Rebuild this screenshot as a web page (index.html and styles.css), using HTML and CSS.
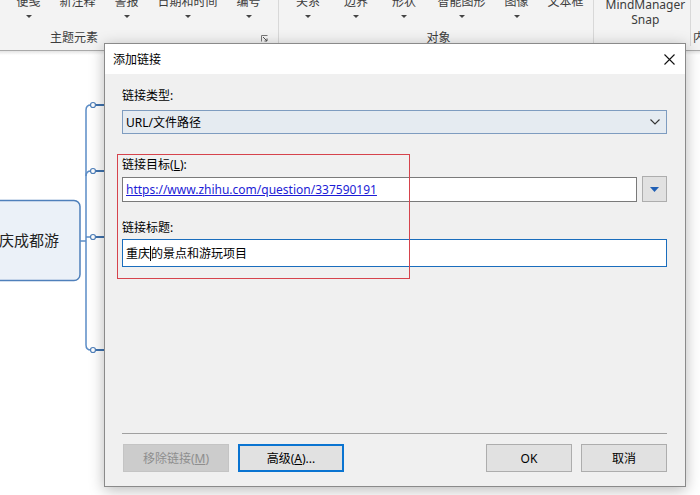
FILE: index.html
```html
<!DOCTYPE html>
<html lang="zh-CN">
<head>
  <meta charset="UTF-8">
  <title>添加链接</title>
  <link rel="stylesheet" href="styles.css">
</head>
<body>
  <header class="ribbon">
    <div class="group g-topic">
      <div class="cmds">
        <div class="cmd"><span>便笺</span><i class="drop-caret"></i></div>
        <div class="cmd"><span>新注释</span></div>
        <div class="cmd"><span>警报</span><i class="drop-caret"></i></div>
        <div class="cmd"><span>日期和时间</span><i class="drop-caret"></i></div>
        <div class="cmd"><span>编号</span><i class="drop-caret"></i></div>
      </div>
      <div class="glabel">
        <span class="topic-label">主题元素</span>
        <svg class="launcher" width="7" height="7" viewBox="0 0 7 7"><path d="M0.5 6.5V0.5H6.5" fill="none" stroke="#777"/><path d="M2 2L6 6M6 3.5V6H3.5" fill="none" stroke="#555"/></svg>
      </div>
    </div>
    <div class="group g-object">
      <div class="cmds">
        <div class="cmd wide"><span>关系</span><i class="drop-caret"></i></div>
        <div class="cmd wide"><span>边界</span><i class="drop-caret"></i></div>
        <div class="cmd wide"><span>形状</span><i class="drop-caret"></i></div>
        <div class="cmd"><span>智能图形</span><i class="drop-caret"></i></div>
        <div class="cmd"><span>图像</span><i class="drop-caret"></i></div>
        <div class="cmd"><span>文本框</span></div>
      </div>
      <div class="glabel center">对象</div>
    </div>
    <div class="group g-snap">
      <div class="cmds">
        <div class="cmd two-line"><span>MindManager</span><span>Snap</span></div>
      </div>
      <div class="glabel"></div>
    </div>
    <div class="group g-more">
      <div class="cmds"></div>
      <div class="glabel">内容</div>
    </div>
  </header>
  <div class="shade"></div>

  <svg class="mindmap" width="110" height="495" viewBox="0 0 110 495">
    <rect x="-12" y="200.5" width="92" height="80" rx="6" fill="#ebf1f8" stroke="#4f80bb" stroke-width="1.5"/>
    <text x="59" y="246" text-anchor="end" class="topic-text">重庆成都游</text>
    <g fill="none" stroke="#5b8cc6" stroke-width="1.5">
      <path d="M80 241H86"/>
      <path d="M104 105H91Q86 105 86 110V345Q86 350 91 350H104"/>
      <path d="M86 176Q86 171 91 171H104"/>
      <path d="M86 237H104"/>
    </g>
    <g fill="none" stroke="#3f72ae" stroke-width="2.2">
      <path d="M96 105H104M96 171H104M96 237H104M96 350H104"/>
    </g>
    <g fill="#fff" stroke="#4f80bb" stroke-width="1.2">
      <circle cx="93" cy="105" r="2.5"/>
      <circle cx="93" cy="171" r="2.5"/>
      <circle cx="93" cy="237" r="2.5"/>
      <circle cx="93" cy="350" r="2.5"/>
    </g>
  </svg>

  <div class="dialog">
    <div class="titlebar">
      <span>添加链接</span>
      <svg class="close" width="11" height="11" viewBox="0 0 11 11"><path d="M0.5 0.5L10.5 10.5M10.5 0.5L0.5 10.5" stroke="#111" stroke-width="1.1"/></svg>
    </div>
    <div class="dbody">
      <div class="lbl first">链接类型:</div>
      <div class="select">
        <span>URL/文件路径</span>
        <svg width="10" height="6" viewBox="0 0 10 6"><path d="M0.5 0.5L5 5L9.5 0.5" fill="none" stroke="#333" stroke-width="1.1"/></svg>
      </div>

      <div class="lbl gap-lg">链接目标(<u>L</u>):</div>
      <div class="url-row">
        <div class="field url"><a href="#">https://www.zhihu.com/question/337590191</a></div>
        <div class="drop-btn">
          <svg width="9" height="5" viewBox="0 0 9 5"><path d="M0 0H9L4.5 5Z" fill="#1f5fb5"/></svg>
        </div>
      </div>

      <div class="lbl gap-md">链接标题:</div>
      <div class="field title">重庆<span class="text-caret"></span>的景点和游玩项目</div>

      <div class="spacer"></div>
      <div class="sep"></div>
      <div class="actions">
        <button class="btn disabled">移除链接(<u>M</u>)</button>
        <button class="btn default">高级(<u>A</u>)...</button>
        <span class="fill"></span>
        <button class="btn">OK</button>
        <button class="btn">取消</button>
      </div>
    </div>
    <div class="annot"></div>
  </div>
</body>
</html>
```

FILE: styles.css
```css
* { box-sizing: border-box; }
body {
  margin: 0;
  width: 700px; height: 495px;
  overflow: hidden;
  position: relative;
  background: #fff;
  font-family: "Noto Sans", "Noto Sans CJK SC", sans-serif;
  font-size: 12px;
  color: #1a1a1a;
}

/* ribbon */
.ribbon {
  display: flex;
  height: 51px;
  background: #f3f3f3;
  border-bottom: 1px solid #a9a9a9;
  overflow: hidden;
  color: #3c3c3c;
}
.group {
  display: flex; flex-direction: column;
  border-right: 1px solid #d8d8d8;
  margin-bottom: 4px;
  flex-shrink: 0;
}
.cmds {
  display: flex;
  height: 30px;
  margin-top: -6px;
}
.cmd {
  display: flex; flex-direction: column; align-items: center;
  padding: 0 9.5px;
}
.cmd.wide { min-width: 48px; }
.cmd span { line-height: 16px; white-space: nowrap; }
.drop-caret {
  margin-top: 5px;
  width: 0; height: 0;
  border-left: 3px solid transparent;
  border-right: 3px solid transparent;
  border-top: 3px solid #444;
}
.cmd.two-line span { line-height: 15px; }
.cmd.two-line { padding-top: 3px; }
.glabel {
  display: flex; align-items: center;
  height: 16px; line-height: 16px;
  margin-top: 6px;
  white-space: nowrap;
}
.glabel.center { justify-content: center; }
.g-topic { width: 279px; padding-left: 7px; }
.g-topic .glabel { padding-left: 43px; padding-right: 10px; }
.topic-label { flex: 1; }
.launcher { margin-top: 1px; }
.g-object { width: 315px; padding-left: 5px; }
.g-snap { width: 97px; padding-left: 2px; }
.g-more { width: 40px; border-right: 0; }
.g-more .glabel { padding-left: 2px; }

.shade {
  height: 4px;
  background: linear-gradient(#e4e4e4, #fff);
}

/* mind map canvas */
.mindmap { position: absolute; left: 0; top: 0; }
.topic-text { font-size: 15px; fill: #222; font-family: "Noto Sans CJK SC", sans-serif; }

/* dialog */
.dialog {
  position: absolute;
  left: 104px; top: 43px;
  width: 582px; height: 444px;
  border: 1px solid #8a8a8a;
  background: #f0f0f0;
  box-shadow: 0 3px 14px rgba(0,0,0,0.28);
  display: flex; flex-direction: column;
}
.titlebar {
  height: 30px;
  background: #fff;
  display: flex; align-items: center; justify-content: space-between;
  padding: 0 10px 0 8px;
  color: #000;
}
.close { margin-top: 1px; }
.dbody {
  flex: 1;
  display: flex; flex-direction: column;
  padding: 0 18px 14px 17px;
}
.lbl { line-height: 16px; color: #000; }
.lbl.first { margin-top: 14px; }
.lbl.gap-lg { margin-top: 23px; }
.lbl.gap-md { margin-top: 18px; }
.select {
  margin-top: 6px;
  height: 24px;
  background: #e5ebf1;
  border: 1px solid #7e9cc0;
  display: flex; align-items: center; justify-content: space-between;
  padding: 0 6px 0 3px;
  color: #000;
}
.url-row {
  margin-top: 3px;
  display: flex; gap: 5px;
  height: 26px;
}
.field {
  background: #fff;
  display: flex; align-items: center;
  padding: 0 3px;
  color: #000;
}
.field.url {
  flex: 1;
  margin-top: 1px;
  border: 1px solid #7a7a7a;
}
.field.url a { color: #1c1cd6; text-decoration: underline; }
.drop-btn {
  width: 25px;
  background: #e1e1e1;
  border: 1px solid #adadad;
  display: flex; align-items: center; justify-content: center;
}
.field.title {
  margin-top: 3px;
  height: 28px;
  border: 1px solid #1a6dbd;
}
.text-caret {
  display: inline-block;
  width: 1px; height: 15px;
  background: #000;
}
.spacer { flex: 1; }
.sep { height: 1px; background: #a0a0a0; }
.actions {
  margin-top: 10px;
  display: flex; gap: 9px;
  height: 28px;
}
.fill { flex: 1; }
.btn {
  font: inherit;
  width: 86px;
  background: #e1e1e1;
  border: 1px solid #adadad;
  color: #000;
  padding: 0;
}
.btn.disabled {
  width: 106px;
  margin-left: 1px;
  background: #cccccc;
  border-color: #c4c4c4;
  color: #8e8e8e;
}
.btn.default {
  width: 106px;
  border: 2px solid #0a74d1;
}
.annot {
  position: absolute;
  left: 12px; top: 110px;
  width: 293px; height: 125px;
  border: 1px solid #d6434c;
  pointer-events: none;
}
```
